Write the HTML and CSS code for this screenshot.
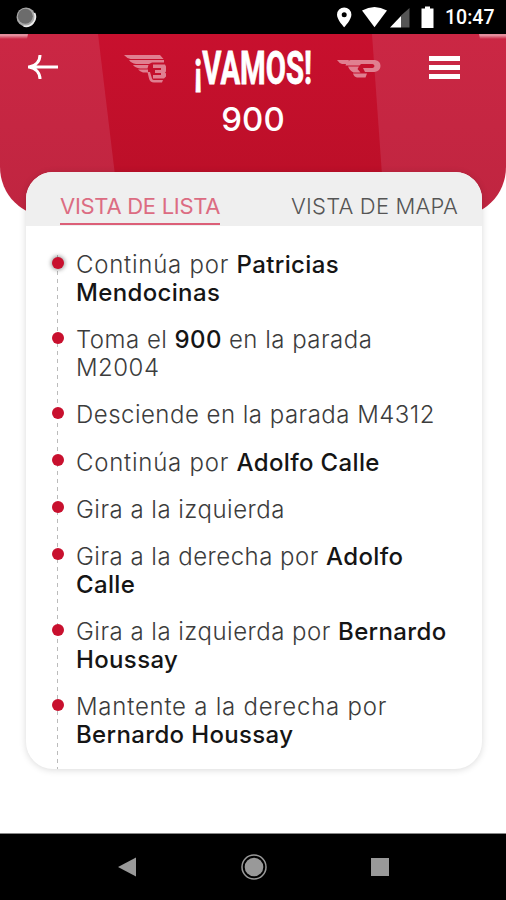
FILE: index.html
```html
<!DOCTYPE html>
<html lang="es">
  <head>
    <meta charset="UTF-8" />
    <meta name="viewport" content="width=device-width, initial-scale=1.0" />
    <title>Vamos</title>
    <link rel="stylesheet" href="styles.css">
  </head>
  <body>
    <div class="statusBar">
      <svg class="loader" viewBox="0 0 22 22">
        <circle cx="11" cy="11" r="9.5" fill="#a8a8a8" />
        <path d="M19.5 7a9.5 9.5 0 0 1-11 13" fill="none" stroke="#eee" stroke-width="1.8" />
        <circle cx="10.3" cy="10.3" r="7.500" fill="#6c6c6c" />
      </svg>
      <div class="statusIcons">
        <svg class="statusSvg" viewBox="0 0 100 34">
          <path fill="#fff" fill-rule="evenodd" d="M7.200 7.500a7.200 7.200 0 0 0-7.200 7.200c0 5 7.200 12.500 7.200 12.500s7.200-7.500 7.200-12.500a7.200 7.200 0 0 0-7.200-7.200zm0 4.700a2.500 2.500 0 1 1 0 5a2.500 2.500 0 1 1 0-5z" />
          <path fill="#fff" d="M25 10.500q12.500-7 25 0l-12.500 16.700z" />
          <path fill="#555" d="M64 15.500l8.500-7.500v19.500H64z" />
          <path fill="#fff" d="M53 27.500L64 16v11.500z" />
          <path fill="#fff" d="M84.500 8.500h3.500v-2h5v2h3.500v19.500h-12z" />
        </svg>
        <span class="clock">10:47</span>
      </div>
    </div>

    <header class="header">
      <svg class="headerBg" viewBox="0 0 506 183" preserveAspectRatio="none">
        <defs>
          <linearGradient id="shade" x1="0" y1="0" x2="0" y2="1">
            <stop offset="0" stop-color="#c8102e" />
            <stop offset="1" stop-color="#b90f27" />
          </linearGradient>
          <linearGradient id="side" x1="0" y1="0" x2="0" y2="1">
            <stop offset="0" stop-color="#cb2744" />
            <stop offset="1" stop-color="#bf2540" />
          </linearGradient>
          <linearGradient id="strip" x1="0" y1="0" x2="0" y2="1">
            <stop offset="0.3" stop-color="#e58d9c" />
            <stop offset="1" stop-color="#cb2744" />
          </linearGradient>
        </defs>
        <rect width="506" height="183" fill="url(#side)" />
        <path d="M98 0h274l13 183H120z" fill="url(#shade)" />
        <path d="M0 0h28l-1 5H0zM479 0h27v5h-26z" fill="url(#strip)" />
      </svg>
      <div class="headerRow">
        <svg class="back" viewBox="0 0 32 26">
          <path d="M1 13h30M13 1c0 6-4 11-11 12c7 1 11 6 11 12" fill="none" stroke="#fff" stroke-width="3" />
        </svg>
        <svg class="wingLeft" viewBox="0 0 44 30">
          <g fill="#e07f90">
            <path d="M0 1h36l3.500 4H6.500q-4-1-6.500-4z" />
            <path d="M5 6h35v2.500H28L25 10H12q-5-1-7-4z" />
            <path d="M9 11h15.500l-1 3.500H16q-5-1-7-3.500z" />
            <path d="M14 15.500h10v3h-5q-3-1-5-3z" />
            <path d="M29 10.500h12l1 2v5l-1 1l1 1v3l-2 2H29v-3.500h8v-2h-6v-3h6v-2h-8z" />
            <path d="M23.500 18h2.500l2 6.500q.5 1.500 2 1.500h9l-1 2.500h-8q-4 0-5-4z" />
          </g>
        </svg>
        <svg class="logo" viewBox="0 0 120 46">
          <text x="0" y="35.500" textLength="118" lengthAdjust="spacingAndGlyphs">¡VAMOS!</text>
        </svg>
        <svg class="wingRight" viewBox="0 0 44 20">
          <g fill="#e07f90">
            <path d="M0 1h12l-2 4H5Q2 4 0 1z" />
            <path d="M13.500 1H38q5.500 1 5.500 6t-6 6H28l-2-4h9.500q2-.3 2-2t-2-2H24L22.500 6.500H8.500q1-4.500 5-5.500z" />
            <path d="M11 7.500h11l-1.500 2.500l3 3.500h-7Q13 12 11 7.500z" />
            <path d="M16 14.500h14l-1.500 4h-8.500q-3-.5-4-4z" />
          </g>
        </svg>
        <div class="menu">
          <span></span>
          <span></span>
          <span></span>
        </div>
      </div>
      <h1 class="line">900</h1>
    </header>

    <main class="card">
      <nav class="tabs">
        <button class="tab active">VISTA DE LISTA</button>
        <button class="tab">VISTA DE MAPA</button>
      </nav>
      <ul class="steps">
        <li class="first wide">Continúa por <b>Patricias<br>Mendocinas</b></li>
        <li>Toma el <b>900</b> en la parada<br>M2004</li>
        <li>Desciende en la parada M4312</li>
        <li class="wide">Continúa por <b>Adolfo Calle</b></li>
        <li>Gira a la izquierda</li>
        <li>Gira a la derecha por <b>Adolfo<br>Calle</b></li>
        <li>Gira a la izquierda por <b>Bernardo<br>Houssay</b></li>
        <li class="wide">Mantente a la derecha por<br><b>Bernardo Houssay</b></li>
      </ul>
    </main>

    <footer class="navBar">
      <svg viewBox="0 0 18 20"><path d="M0 10L18 0.500v19z" fill="#999" /></svg>
      <svg class="home" viewBox="0 0 26 26">
        <circle cx="13" cy="13" r="12" fill="none" stroke="#999" stroke-width="1.500" />
        <circle cx="13" cy="13" r="9.300" fill="#999" />
      </svg>
      <svg viewBox="0 0 18 18"><rect width="18" height="18" fill="#999" /></svg>
    </footer>
  </body>
</html>
```
FILE: styles.css
```css
* {
  box-sizing: border-box;
}
body {
  margin: 0;
  height: 900px;
  display: flex;
  flex-direction: column;
  overflow: hidden;
  background-color: #fff;
  font-family: "Inter", "Open Sans", sans-serif;
}
.statusBar {
  height: 34px;
  flex: none;
  display: flex;
  justify-content: space-between;
  padding: 0 11px 0 15px;
  background-color: #000;
}
.loader {
  width: 22px;
  height: 22px;
  margin-top: 6px;
}
.statusIcons {
  display: flex;
}
.statusSvg {
  width: 100px;
  height: 34px;
  margin-right: 8px;
}
.clock {
  width: 50px;
  color: #fff;
  font: 500 19.500px/36px "Roboto", sans-serif;
  white-space: nowrap;
}
.header {
  position: relative;
  flex: none;
  height: 183px;
  border-radius: 0 0 50px 50px;
  overflow: hidden;
}
.headerBg {
  position: absolute;
  inset: 0;
  width: 100%;
  height: 100%;
}
.headerRow {
  position: relative;
  height: 65px;
  display: flex;
  align-items: flex-start;
  padding-left: 27px;
}
.back {
  width: 32px;
  height: 26px;
  margin-top: 20px;
}
.wingLeft {
  width: 44px;
  height: 30px;
  margin: 20px 0 0 65px;
}
.logo {
  width: 120px;
  height: 46px;
  margin: 14px 0 0 26px;
  overflow: visible;
}
.logo text {
  fill: #fff;
  stroke: #fff;
  stroke-width: 0.8px;
  font: 700 47px "Roboto", sans-serif;
}
.wingRight {
  width: 44px;
  height: 20px;
  margin: 25px 0 0 23px;
}
.menu {
  width: 31px;
  display: flex;
  flex-direction: column;
  gap: 4px;
  margin: 22px 0 0 48px;
}
.menu span {
  height: 5px;
  background-color: #fff;
}
.line {
  position: relative;
  margin: 0;
  color: #fff;
  font-size: 33px;
  font-weight: 500;
  line-height: 40px;
  text-align: center;
}
.card {
  position: relative;
  flex: none;
  width: 456px;
  height: 597px;
  margin: -45px 0 0 26px;
  border-radius: 27px;
  overflow: hidden;
  background-color: #fff;
  box-shadow: 0 1px 7px rgba(0, 0, 0, 0.15);
}
.tabs {
  height: 54px;
  display: flex;
  justify-content: space-between;
  align-items: flex-end;
  padding: 0 24px 1px 34px;
  background-color: #efefef;
}
.tab {
  height: 36px;
  padding: 0;
  border: 0;
  border-bottom: 2px solid transparent;
  background: none;
  color: #555;
  font: 300 22px/32px "Inter", sans-serif;
  letter-spacing: 0.2px;
  white-space: nowrap;
}
.tab.active {
  color: #dc6c82;
  font-weight: 400;
  letter-spacing: -0.28px;
  border-bottom-color: #dc5f78;
}
.steps {
  height: 543px;
  margin: 0 0 0 31px;
  padding: 25px 0 0 19px;
  list-style: none;
  background: repeating-linear-gradient(#bbb 0 4px, transparent 4px 8px) 0 29px / 1px 100% no-repeat;
}
.steps li {
  position: relative;
  margin-bottom: 19.200px;
  color: #3c3c3c;
  font-size: 24px;
  font-weight: 300;
  line-height: 28px;
  letter-spacing: 0.48px;
  white-space: nowrap;
}
.steps li.wide {
  letter-spacing: 0.75px;
}
.steps li b {
  color: #151515;
  font-weight: 500;
  letter-spacing: 0.35px;
}
.steps li::before {
  content: "";
  position: absolute;
  left: -24px;
  top: 5.500px;
  width: 12px;
  height: 12px;
  border-radius: 50%;
  background-color: #c8102e;
}
.steps li.first::before {
  box-shadow: 0 0 4px 1px rgba(0, 0, 0, 0.4);
}
.navBar {
  flex: none;
  height: 67px;
  margin-top: auto;
  display: flex;
  align-items: center;
  justify-content: space-between;
  padding: 0 117px 1px 118px;
  background-color: #000;
  border-top: 1px solid #888;
}
.navBar svg {
  width: 18px;
  height: 20px;
}
.navBar .home {
  width: 26px;
  height: 26px;
}
```
